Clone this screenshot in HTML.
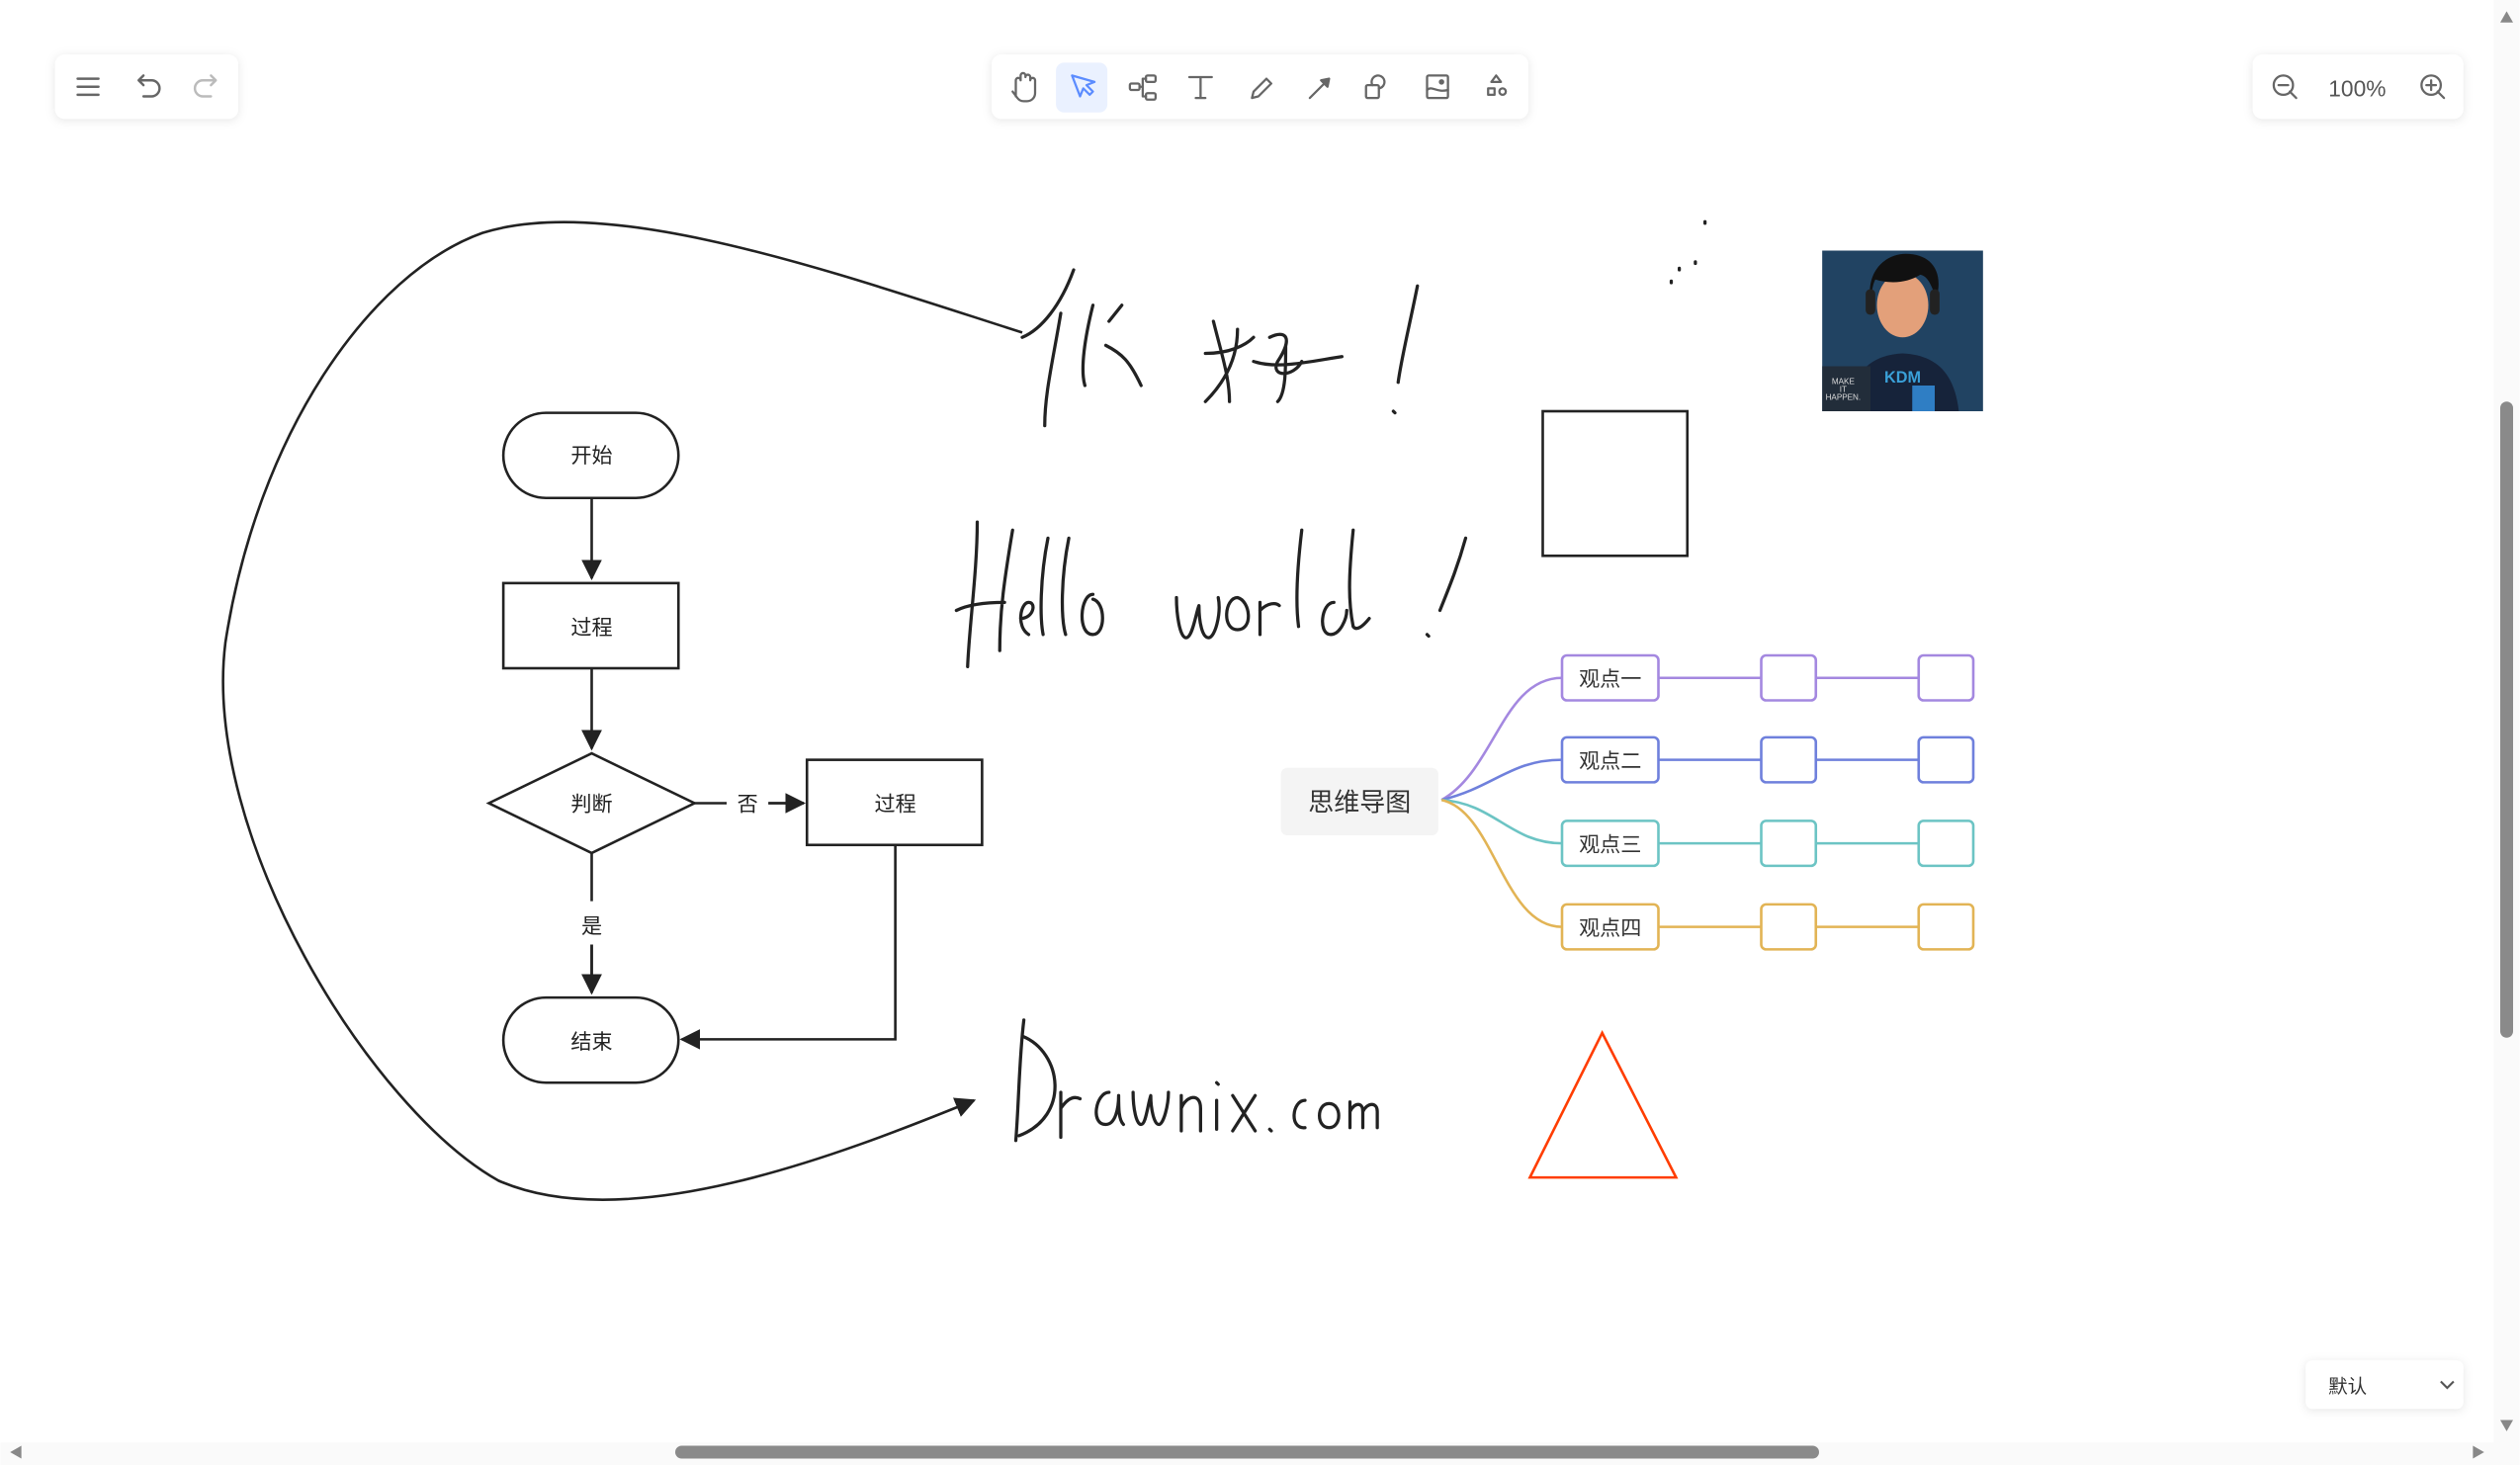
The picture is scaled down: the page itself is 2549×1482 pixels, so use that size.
<!DOCTYPE html>
<html><head><meta charset="utf-8"><style>
html,body{margin:0;padding:0;background:#fff;overflow:hidden}
svg{display:block}
text{font-family:"Liberation Sans","Noto Sans CJK SC",sans-serif}
</style></head><body>
<svg width="2549" height="1482" viewBox="0 0 1568 912" xmlns="http://www.w3.org/2000/svg">
<defs>
<filter id="sh" x="-20%" y="-40%" width="140%" height="180%"><feDropShadow dx="0" dy="1" stdDeviation="3" flood-color="#000" flood-opacity="0.10"/></filter>
<marker id="ar" viewBox="0 0 10 10" refX="9" refY="5" markerWidth="8" markerHeight="8" orient="auto"><path d="M0 0L10 5L0 10z" fill="#222"/></marker>
</defs>
<rect width="1568" height="912" fill="#fff"/>

<!-- left toolbar -->
<rect x="34" y="34" width="114" height="40" rx="6" fill="#fff" filter="url(#sh)"/>
<g stroke="#666" stroke-width="1.5" fill="none" stroke-linecap="round">
<path d="M48 49h13M48 54h13M48 59h13"/>
<path d="M86 50h8a5 5 0 0 1 0 10h-5M86 50l3-3M86 50l3 3"/>
<path d="M134 50h-8a5 5 0 0 0 0 10h5M134 50l-3-3M134 50l-3 3" stroke="#bbb"/>
</g>

<!-- center toolbar -->
<rect x="617" y="34" width="334" height="40" rx="6" fill="#fff" filter="url(#sh)"/>
<rect x="657" y="39" width="32" height="31" rx="5" fill="#eaf1ff"/>
<g stroke="#666" stroke-width="1.4" fill="none" stroke-linecap="round" stroke-linejoin="round">
<path d="M632 60v-10a1.5 1.5 0 0 1 3 0v-3a1.5 1.5 0 0 1 3 0v1a1.5 1.5 0 0 1 3 0v2a1.5 1.5 0 0 1 3 0v8a5 5 0 0 1-5 5h-2a5 5 0 0 1-4-2l-3-4"/>
<path d="M667 47l5 13 2-5 4 4 2-2-4-4 5-2z" stroke="#5b8cff"/>
<rect x="703" y="52" width="6" height="4" rx="1"/><rect x="713" y="47" width="6" height="4" rx="1"/><rect x="713" y="58" width="6" height="4" rx="1"/><path d="M709 54h2v-5h2M711 54v6h2"/>
<path d="M740 48h14M747 48v13M744 61h6"/>
<path d="M779 61l1-4 8-8 3 3-8 8z"/>
<path d="M815 61l12-12M827 49l-5 1 4 4z" fill="#666"/>
<rect x="850" y="53" width="8" height="8" rx="1"/><path d="M858 55a4 4 0 1 0-4-2"/>
<rect x="888" y="47" width="13" height="14" rx="1"/><path d="M888 56c3-3 6 2 13 0"/><circle cx="897" cy="51" r="1" fill="#666"/>
<path d="M931 47l3 4h-6z"/><rect x="926" y="55" width="4" height="4"/><circle cx="935" cy="57" r="2"/>
</g>

<!-- zoom toolbar -->
<rect x="1402" y="34" width="131" height="40" rx="6" fill="#fff" filter="url(#sh)"/>
<g stroke="#666" stroke-width="1.4" fill="none" stroke-linecap="round">
<circle cx="1421" cy="53" r="6"/><path d="M1425 57l4 4M1418 53h6"/>
<circle cx="1513" cy="53" r="6"/><path d="M1517 57l4 4M1510 53h6M1513 50v6"/>
</g>
<text x="1467" y="60" font-size="14" fill="#555" text-anchor="middle">100%</text>

<!-- big loop -->
<path d="M636 207C520 170 380 120 300 145C230 170 160 270 140 400C125 520 230 690 310 735C390 770 520 720 606 685" stroke="#222" stroke-width="1.6" fill="none" marker-end="url(#ar)"/>

<!-- flowchart -->
<g stroke="#222" stroke-width="1.6" fill="#fff">
<rect x="313" y="257" width="109" height="53" rx="26.5"/>
<rect x="313" y="363" width="109" height="53"/>
<path d="M304 500L368 469L432 500L368 531z"/>
<rect x="502" y="473" width="109" height="53"/>
<rect x="313" y="621" width="109" height="53" rx="26.5"/>
</g>
<g stroke="#222" stroke-width="1.6" fill="none">
<path d="M368 310v50" marker-end="url(#ar)"/>
<path d="M368 416v50" marker-end="url(#ar)"/>
<path d="M432 500h20M478 500h22" /><path d="M478 500h22" marker-end="url(#ar)"/>
<path d="M368 531v30M368 588v30" /><path d="M368 588v30" marker-end="url(#ar)"/>
<path d="M557 526v121h-133" marker-end="url(#ar)"/>
</g>
<g font-size="13" fill="#222" text-anchor="middle">
<text x="368" y="288">开始</text><text x="368" y="395">过程</text><text x="368" y="505">判断</text>
<text x="557" y="505">过程</text><text x="368" y="653">结束</text><text x="465" y="505">否</text><text x="368" y="581">是</text>
</g>

<!-- handwriting -->
<g stroke="#222" stroke-width="2" fill="none" stroke-linecap="round" stroke-linejoin="round">
<path d="M668 168C660 190 648 205 636 210M660 195C655 225 650 245 650 265M680 190C675 210 672 230 675 240M690 200l8-10M688 215c10 5 15 10 22 25"/>
<path d="M755 200c5 20 10 35 10 50M750 220c15 0 25-5 30-10M770 205c0 20-10 35-20 45M790 210c10-5 15 0 5 15c-5 10 10 10 15 0M780 225c15 5 35 0 55-3M800 215c0 15 0 30-5 35"/>
<path d="M882 178c-5 25-10 45-12 60M867 256l1 1"/>
<path d="M608 325c0 30-5 65-6 90M595 380c10-5 25-5 30-5M630 330c-5 30-8 50-8 75M635 385c8 0 10-10 5-10s-8 15 0 20M652 335c-5 25-5 50-3 60M665 335c-5 25-5 50-2 60M680 370c-8 0-10 25 0 25c8 0 8-20 0-22"/>
<path d="M732 372c0 10 2 25 6 25s6-15 8-20c0 10 2 20 6 20s8-15 6-25M770 372c-8 0-10 20 0 20s8-18 0-20M784 375c0 8 0 15 0 20M784 380c5-5 10-5 12-3M810 330c-3 25-4 45-2 60M830 375c-8 0-10 20-2 20c6 0 10-10 10-15M842 330c-3 30-3 45 0 60c2 3 6 0 10-5"/>
<path d="M912 335c-5 18-10 30-16 45M888 395l1 1"/>
<path d="M637 635c-3 25-3 50-5 75M636 645c25 10 30 50-2 62M660 680c0 10 0 20 0 28M660 690c4-6 8-8 12-6M690 680c-8 0-12 20-2 20c6 0 8-10 8-18c0 8 0 15 3 18M705 680c0 10 2 20 5 20s4-12 6-18c0 8 2 18 5 18s6-12 6-20M735 682c0 8 0 18 0 22M735 690c3-8 12-10 12 0v14M757 685v18M757 674l1 1M767 682l14 22M781 682l-14 22M790 703l1 1M812 685c-8 0-10 18 0 17M827 687c-8 0-8 15 0 15s8-15 0-15M840 686v16M840 692c3-6 8-6 8 0v10M848 692c3-6 9-6 9 0v10"/>
<path d="M1061 138l0 1M1045 167l0 1M1040 175l0 1M1055 163l0 1"/>
</g>

<!-- square -->
<rect x="960" y="256" width="90" height="90" fill="none" stroke="#222" stroke-width="1.6"/>

<!-- avatar -->
<rect x="1134" y="156" width="100" height="100" fill="#1d3a55"/>
<rect x="1134" y="156" width="100" height="100" fill="#24496a" opacity="0.6"/>
<path d="M1150 256c2-25 15-35 34-36c19 1 32 10 35 36z" fill="#16233a"/>
<ellipse cx="1184" cy="190" rx="16" ry="20" fill="#e3a07a"/>
<path d="M1164 188c-3-20 10-30 22-30c15 0 24 10 19 28c-3-8-5-14-10-15c-8 5-18 6-28 3c-2 4-2 8-3 14z" fill="#111"/>
<rect x="1161" y="180" width="6" height="16" rx="3" fill="#222"/><rect x="1201" y="180" width="6" height="16" rx="3" fill="#222"/>
<text x="1184" y="238" font-size="10" font-weight="bold" fill="#3aa0d8" text-anchor="middle">KDM</text>
<rect x="1190" y="240" width="14" height="16" fill="#2f7ec4"/>
<rect x="1134" y="228" width="30" height="28" fill="#222d3a"/>
<text x="1147" y="239" font-size="5" fill="#ddd" text-anchor="middle">MAKE</text>
<text x="1147" y="244" font-size="5" fill="#ddd" text-anchor="middle">IT</text>
<text x="1147" y="249" font-size="5" fill="#ddd" text-anchor="middle">HAPPEN.</text>

<!-- mind map -->
<rect x="797" y="478" width="98" height="42" rx="4" fill="#f4f4f4"/>
<text x="846" y="505" font-size="16" fill="#333" text-anchor="middle">思维导图</text>
<g fill="none" stroke-width="1.6">
<g stroke="#a488e0"><path d="M897 498C930 480 935 422 972 422M1032 422h64M1130 422h64"/><rect x="972" y="408" width="60" height="28" rx="3" fill="#fff"/><rect x="1096" y="408" width="34" height="28" rx="3" fill="#fff"/><rect x="1194" y="408" width="34" height="28" rx="3" fill="#fff"/></g>
<g stroke="#6f80dc"><path d="M897 498C930 490 940 473 972 473M1032 473h64M1130 473h64"/><rect x="972" y="459" width="60" height="28" rx="3" fill="#fff"/><rect x="1096" y="459" width="34" height="28" rx="3" fill="#fff"/><rect x="1194" y="459" width="34" height="28" rx="3" fill="#fff"/></g>
<g stroke="#6cc4c4"><path d="M897 498C930 500 940 525 972 525M1032 525h64M1130 525h64"/><rect x="972" y="511" width="60" height="28" rx="3" fill="#fff"/><rect x="1096" y="511" width="34" height="28" rx="3" fill="#fff"/><rect x="1194" y="511" width="34" height="28" rx="3" fill="#fff"/></g>
<g stroke="#e2b455"><path d="M897 498C930 505 935 577 972 577M1032 577h64M1130 577h64"/><rect x="972" y="563" width="60" height="28" rx="3" fill="#fff"/><rect x="1096" y="563" width="34" height="28" rx="3" fill="#fff"/><rect x="1194" y="563" width="34" height="28" rx="3" fill="#fff"/></g>
</g>
<g font-size="13" fill="#333" text-anchor="middle">
<text x="1002" y="427">观点一</text><text x="1002" y="478">观点二</text><text x="1002" y="530">观点三</text><text x="1002" y="582">观点四</text>
</g>

<!-- triangle -->
<path d="M997 643L1043 733H952z" fill="none" stroke="#ff3d00" stroke-width="1.6"/>

<!-- bottom right select -->
<rect x="1435" y="847" width="98" height="30" rx="4" fill="#fff" filter="url(#sh)"/>
<text x="1449" y="867" font-size="12" fill="#333">默认</text>
<path d="M1519 860l4 4 4-4" stroke="#555" stroke-width="1.3" fill="none"/>

<!-- scrollbars -->
<rect x="1552" y="0" width="16" height="912" fill="#fafafa"/>
<rect x="1556" y="250" width="8" height="396" rx="4" fill="#8a8a8a"/>
<path d="M1556 14l4-7 4 7z" fill="#888"/><path d="M1556 884l4 7 4-7z" fill="#888"/>
<rect x="0" y="898" width="1552" height="14" fill="#fafafa"/>
<rect x="420" y="900" width="712" height="8" rx="4" fill="#8a8a8a"/>
<path d="M13 900l-7 4 7 4z" fill="#888"/><path d="M1539 900l7 4-7 4z" fill="#888"/>
</svg>
</body></html>
